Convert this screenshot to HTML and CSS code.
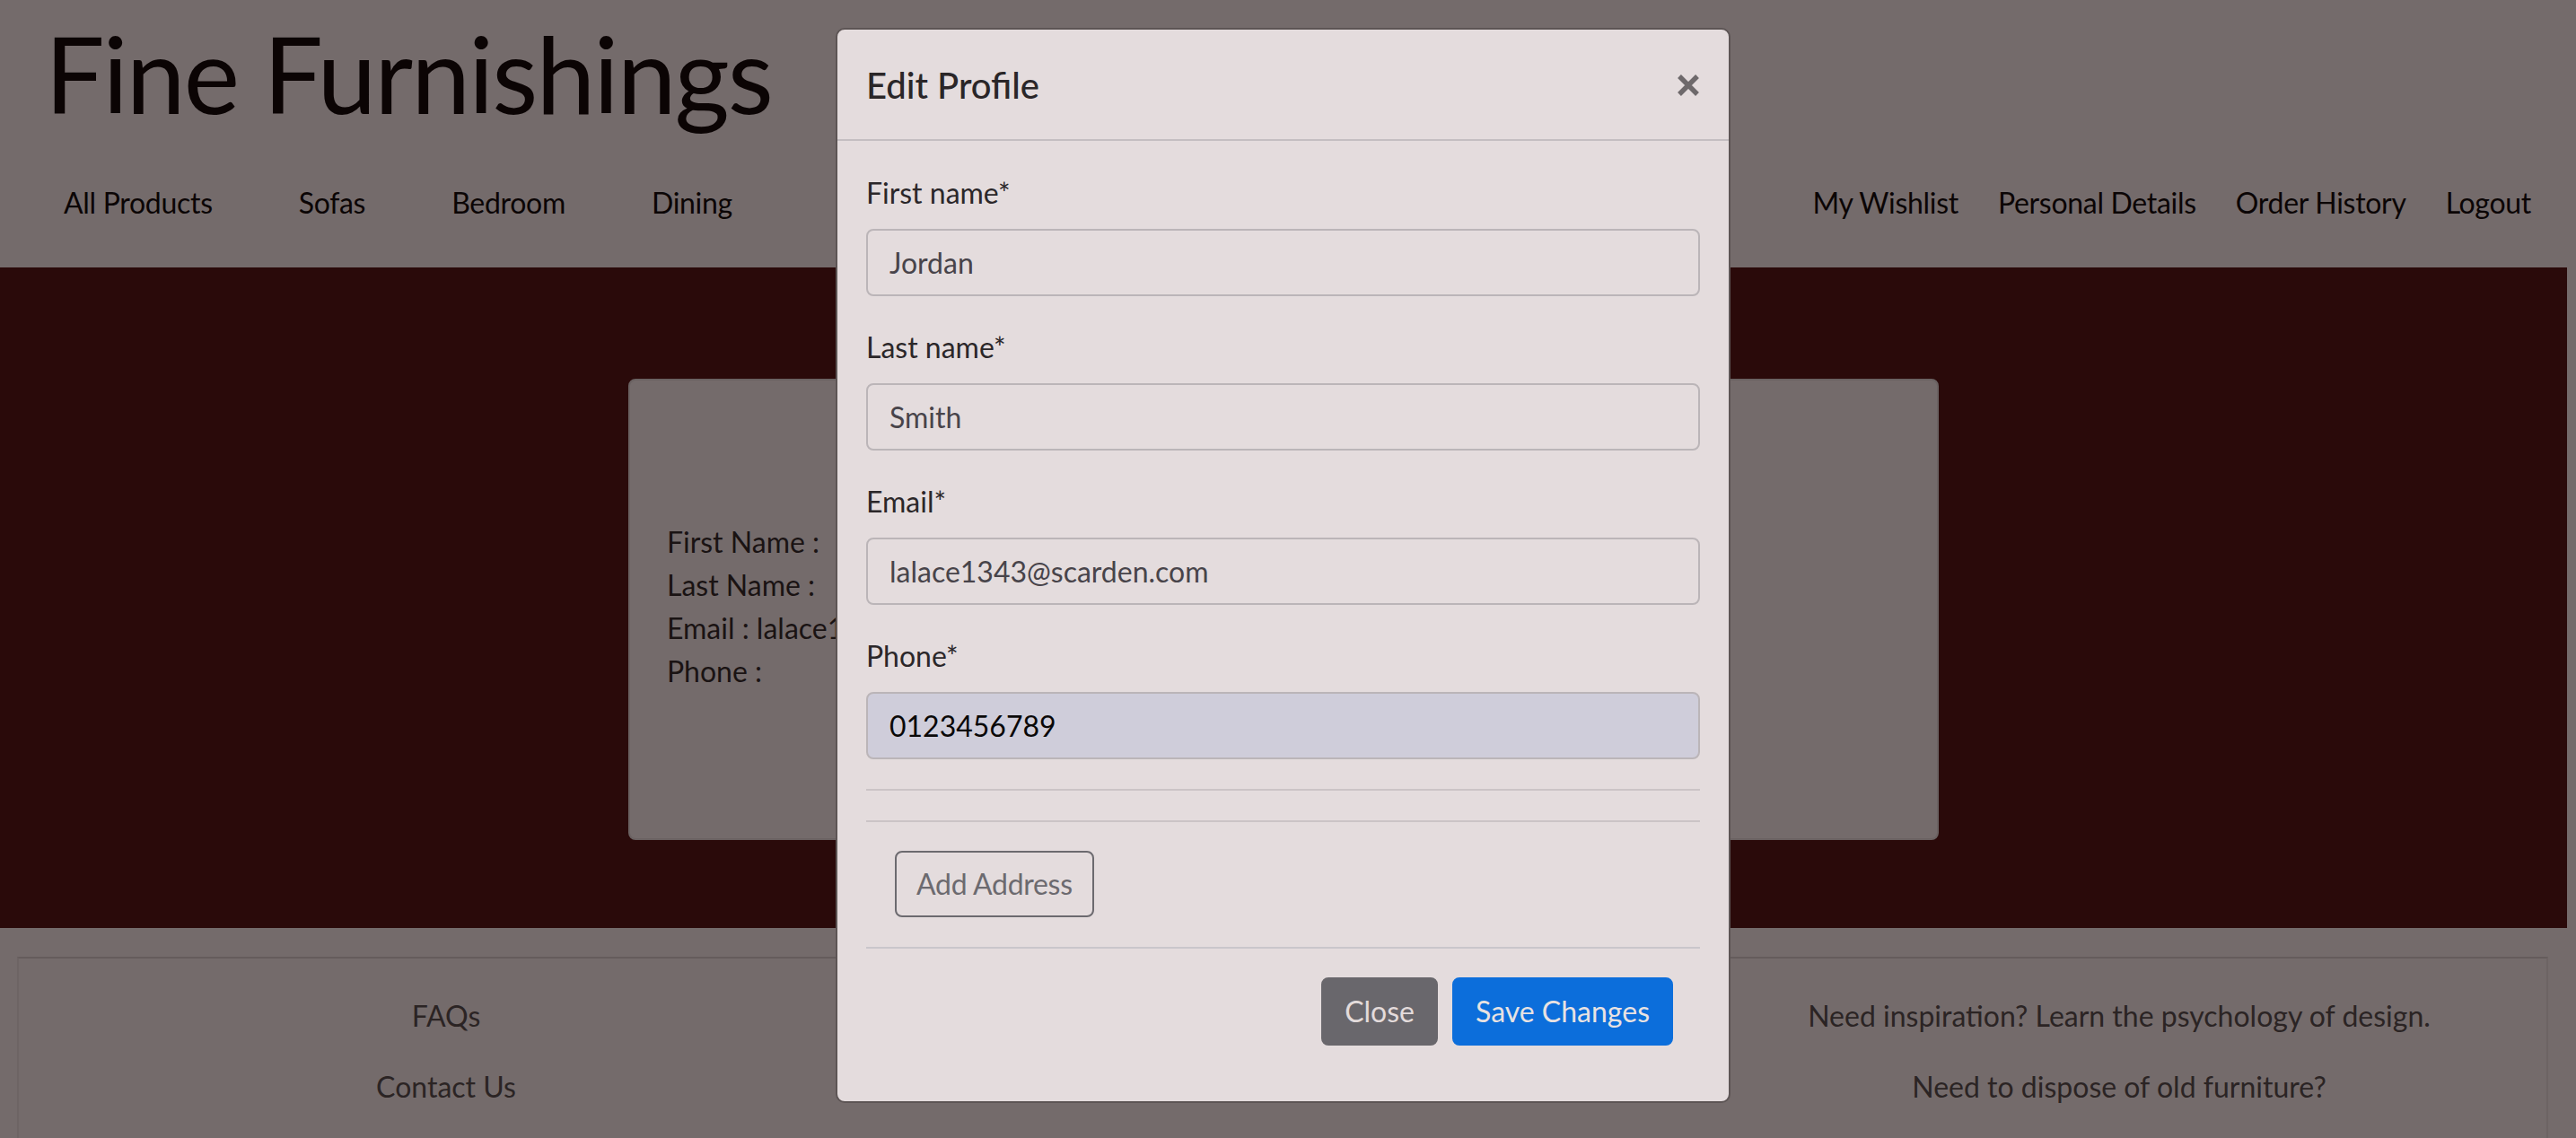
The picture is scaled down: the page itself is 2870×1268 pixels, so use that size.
FILE: index.html
```html
<!DOCTYPE html>
<html lang="en">
<head>
<meta charset="utf-8">
<title>Fine Furnishings - Personal Details</title>
<link rel="stylesheet" href="styles.css">
</head>
<body class="page">
  <header class="site-header">
    <h1 class="brand">Fine Furnishings</h1>
    <nav class="main-nav">
      <div class="nav-group nav-left">
        <a class="nav-link" href="#">All Products</a>
        <a class="nav-link" href="#">Sofas</a>
        <a class="nav-link" href="#">Bedroom</a>
        <a class="nav-link" href="#">Dining</a>
      </div>
      <div class="nav-group nav-right">
        <a class="nav-link" href="#">My Wishlist</a>
        <a class="nav-link" href="#">Personal Details</a>
        <a class="nav-link" href="#">Order History</a>
        <a class="nav-link" href="#">Logout</a>
      </div>
    </nav>
  </header>

  <main class="main-band">
    <section class="details-card">
      <p class="detail-line">First Name : </p>
      <p class="detail-line">Last Name : </p>
      <p class="detail-line">Email : lalace1343@scarden.com</p>
      <p class="detail-line">Phone : </p>
    </section>
  </main>

  <footer class="site-footer">
    <div class="footer-box">
      <div class="footer-col">
        <a class="footer-link" href="#">FAQs</a>
        <a class="footer-link" href="#">Contact Us</a>
      </div>
      <div class="footer-col"></div>
      <div class="footer-col">
        <a class="footer-link" href="#">Need inspiration? Learn the psychology of design.</a>
        <a class="footer-link" href="#">Need to dispose of old furniture?</a>
      </div>
    </div>
  </footer>

  <div class="modal" role="dialog" aria-labelledby="editProfileTitle">
    <div class="modal-header">
      <h5 class="modal-title" id="editProfileTitle">Edit Profile</h5>
      <button class="modal-close" type="button" aria-label="Close">
        <svg class="close-icon" viewBox="0 0 26 26" width="26" height="26" aria-hidden="true">
          <path d="M3 3 L23 23 M23 3 L3 23" stroke="#6e696b" stroke-width="5.4" fill="none"/>
        </svg>
      </button>
    </div>
    <div class="modal-body">
      <form class="profile-form">
        <div class="form-group">
          <label class="form-label" for="fname">First name*</label>
          <input class="form-control" id="fname" type="text" value="Jordan">
        </div>
        <div class="form-group">
          <label class="form-label" for="lname">Last name*</label>
          <input class="form-control" id="lname" type="text" value="Smith">
        </div>
        <div class="form-group">
          <label class="form-label" for="email">Email*</label>
          <input class="form-control" id="email" type="email" value="lalace1343@scarden.com">
        </div>
        <div class="form-group">
          <label class="form-label" for="phone">Phone*</label>
          <input class="form-control form-control-filled" id="phone" type="tel" value="0123456789">
        </div>
        <hr class="divider">
        <hr class="divider divider-second">
        <div class="address-section">
          <button class="btn btn-outline" type="button">Add Address</button>
        </div>
        <div class="modal-footer">
          <button class="btn btn-secondary" type="button">Close</button>
          <button class="btn btn-primary" type="button">Save Changes</button>
        </div>
      </form>
    </div>
  </div>
</body>
</html>
```

FILE: styles.css
```css
* {
  box-sizing: border-box;
}

html,
body {
  margin: 0;
  height: 1268px;
  overflow: hidden;
}

.page {
  position: relative;
  padding-right: 10px;
  background: #746b6b;
  font-family: "Lato", "Liberation Sans", sans-serif;
  font-size: 32px;
  line-height: 48px;
  color: #0b0505;
}

/* ---------- Header ---------- */
.site-header {
  display: flex;
  flex-direction: column;
  padding: 23px 15px 48px 50px;
  background: #746b6b;
  height: 298px;
}

.brand {
  margin: 0;
  font-family: "Lato", "Liberation Sans", sans-serif;
  font-weight: 400;
  font-size: 118px;
  line-height: 118px;
  letter-spacing: -2px;
  color: #0b0404;
}

.main-nav {
  display: flex;
  justify-content: space-between;
  margin-top: 61px;
  margin-left: -27px;
}

.nav-group {
  display: flex;
}

.nav-link {
  color: #0b0505;
  text-decoration: none;
}

.nav-left .nav-link {
  padding: 0 48px;
  letter-spacing: -0.3px;
}

.nav-right .nav-link {
  padding: 0 22px;
  letter-spacing: -0.3px;
}

.nav-right .nav-link:last-child {
  padding-right: 25px;
}

/* ---------- Main band ---------- */
.main-band {
  display: flex;
  justify-content: center;
  height: 736px;
  padding-top: 124px;
  background: #2a0a0a;
}

.details-card {
  width: 1460px;
  height: 514px;
  padding: 156px 41px 0;
  background: #746b6b;
  border: 2px solid #6a6262;
  border-radius: 8px;
}

.detail-line {
  margin: 0;
  color: #1a1313;
  white-space: nowrap;
}

/* ---------- Footer ---------- */
.site-footer {
  height: 234px;
  padding: 32px 21px 0 19px;
  background: #746b6b;
}

.footer-box {
  display: flex;
  height: 202px;
  padding: 40px 10px 0;
  border-top: 2px solid #655c5c;
  border-left: 2px solid #6d6464;
  border-right: 2px solid #6d6464;
}

.footer-col {
  flex: 1;
  display: flex;
  flex-direction: column;
  align-items: center;
  gap: 31px;
}

.footer-link {
  color: #2b2424;
  text-decoration: none;
}

/* ---------- Modal ---------- */
.modal {
  position: absolute;
  top: 31px;
  left: 931px;
  width: 997px;
  background: #e4dcdd;
  border: 2px solid #5d5555;
  border-radius: 10px;
}

.modal-header {
  display: flex;
  align-items: center;
  justify-content: space-between;
  padding: 32px 32px 30px;
  border-bottom: 2px solid #c4bec1;
}

.modal-title {
  margin: 0;
  font-size: 40px;
  line-height: 60px;
  font-weight: 500;
  color: #2a2628;
}

.modal-close {
  display: flex;
  padding: 0;
  border: 0;
  background: transparent;
}

.close-icon {
  display: block;
}

.modal-body {
  padding: 34px 32px 30px;
}

.form-group {
  margin-bottom: 33px;
}

.form-label {
  display: block;
  margin-bottom: 16px;
  color: #2b2729;
}

.form-control {
  display: block;
  width: 100%;
  height: 75px;
  padding: 0 24px;
  font-family: inherit;
  font-size: 32px;
  color: #48444a;
  background: #e4dcdd;
  border: 2px solid #bbb5b8;
  border-radius: 8px;
  outline: none;
}

.form-control-filled {
  background: #cfcdda;
  color: #0a0808;
}

.divider {
  margin: 0;
  height: 0;
  border: 0;
  border-top: 2px solid #cbc4c6;
}

.divider-second {
  margin-top: 33px;
}

.address-section {
  display: flex;
  padding: 32px 32px 33px;
}

.btn {
  height: 76px;
  padding: 0 24px;
  font-family: inherit;
  font-size: 32px;
  line-height: 48px;
  border: 2px solid transparent;
  border-radius: 8px;
  cursor: pointer;
}

.btn-outline {
  height: 74px;
  padding: 0 22px;
  letter-spacing: -0.3px;
  color: #6c6a6f;
  background: transparent;
  border-color: #6c6a6f;
}

.modal-footer {
  display: flex;
  justify-content: flex-end;
  padding: 24px 22px 24px 24px;
  border-top: 2px solid #c9c6cb;
}

.modal-footer .btn {
  margin: 8px;
}

.btn-secondary {
  background: #69676c;
  border-color: #69676c;
  color: #e3dbdb;
}

.btn-primary {
  background: #0c6edb;
  border-color: #0c6edb;
  color: #e8e2e2;
}
```
